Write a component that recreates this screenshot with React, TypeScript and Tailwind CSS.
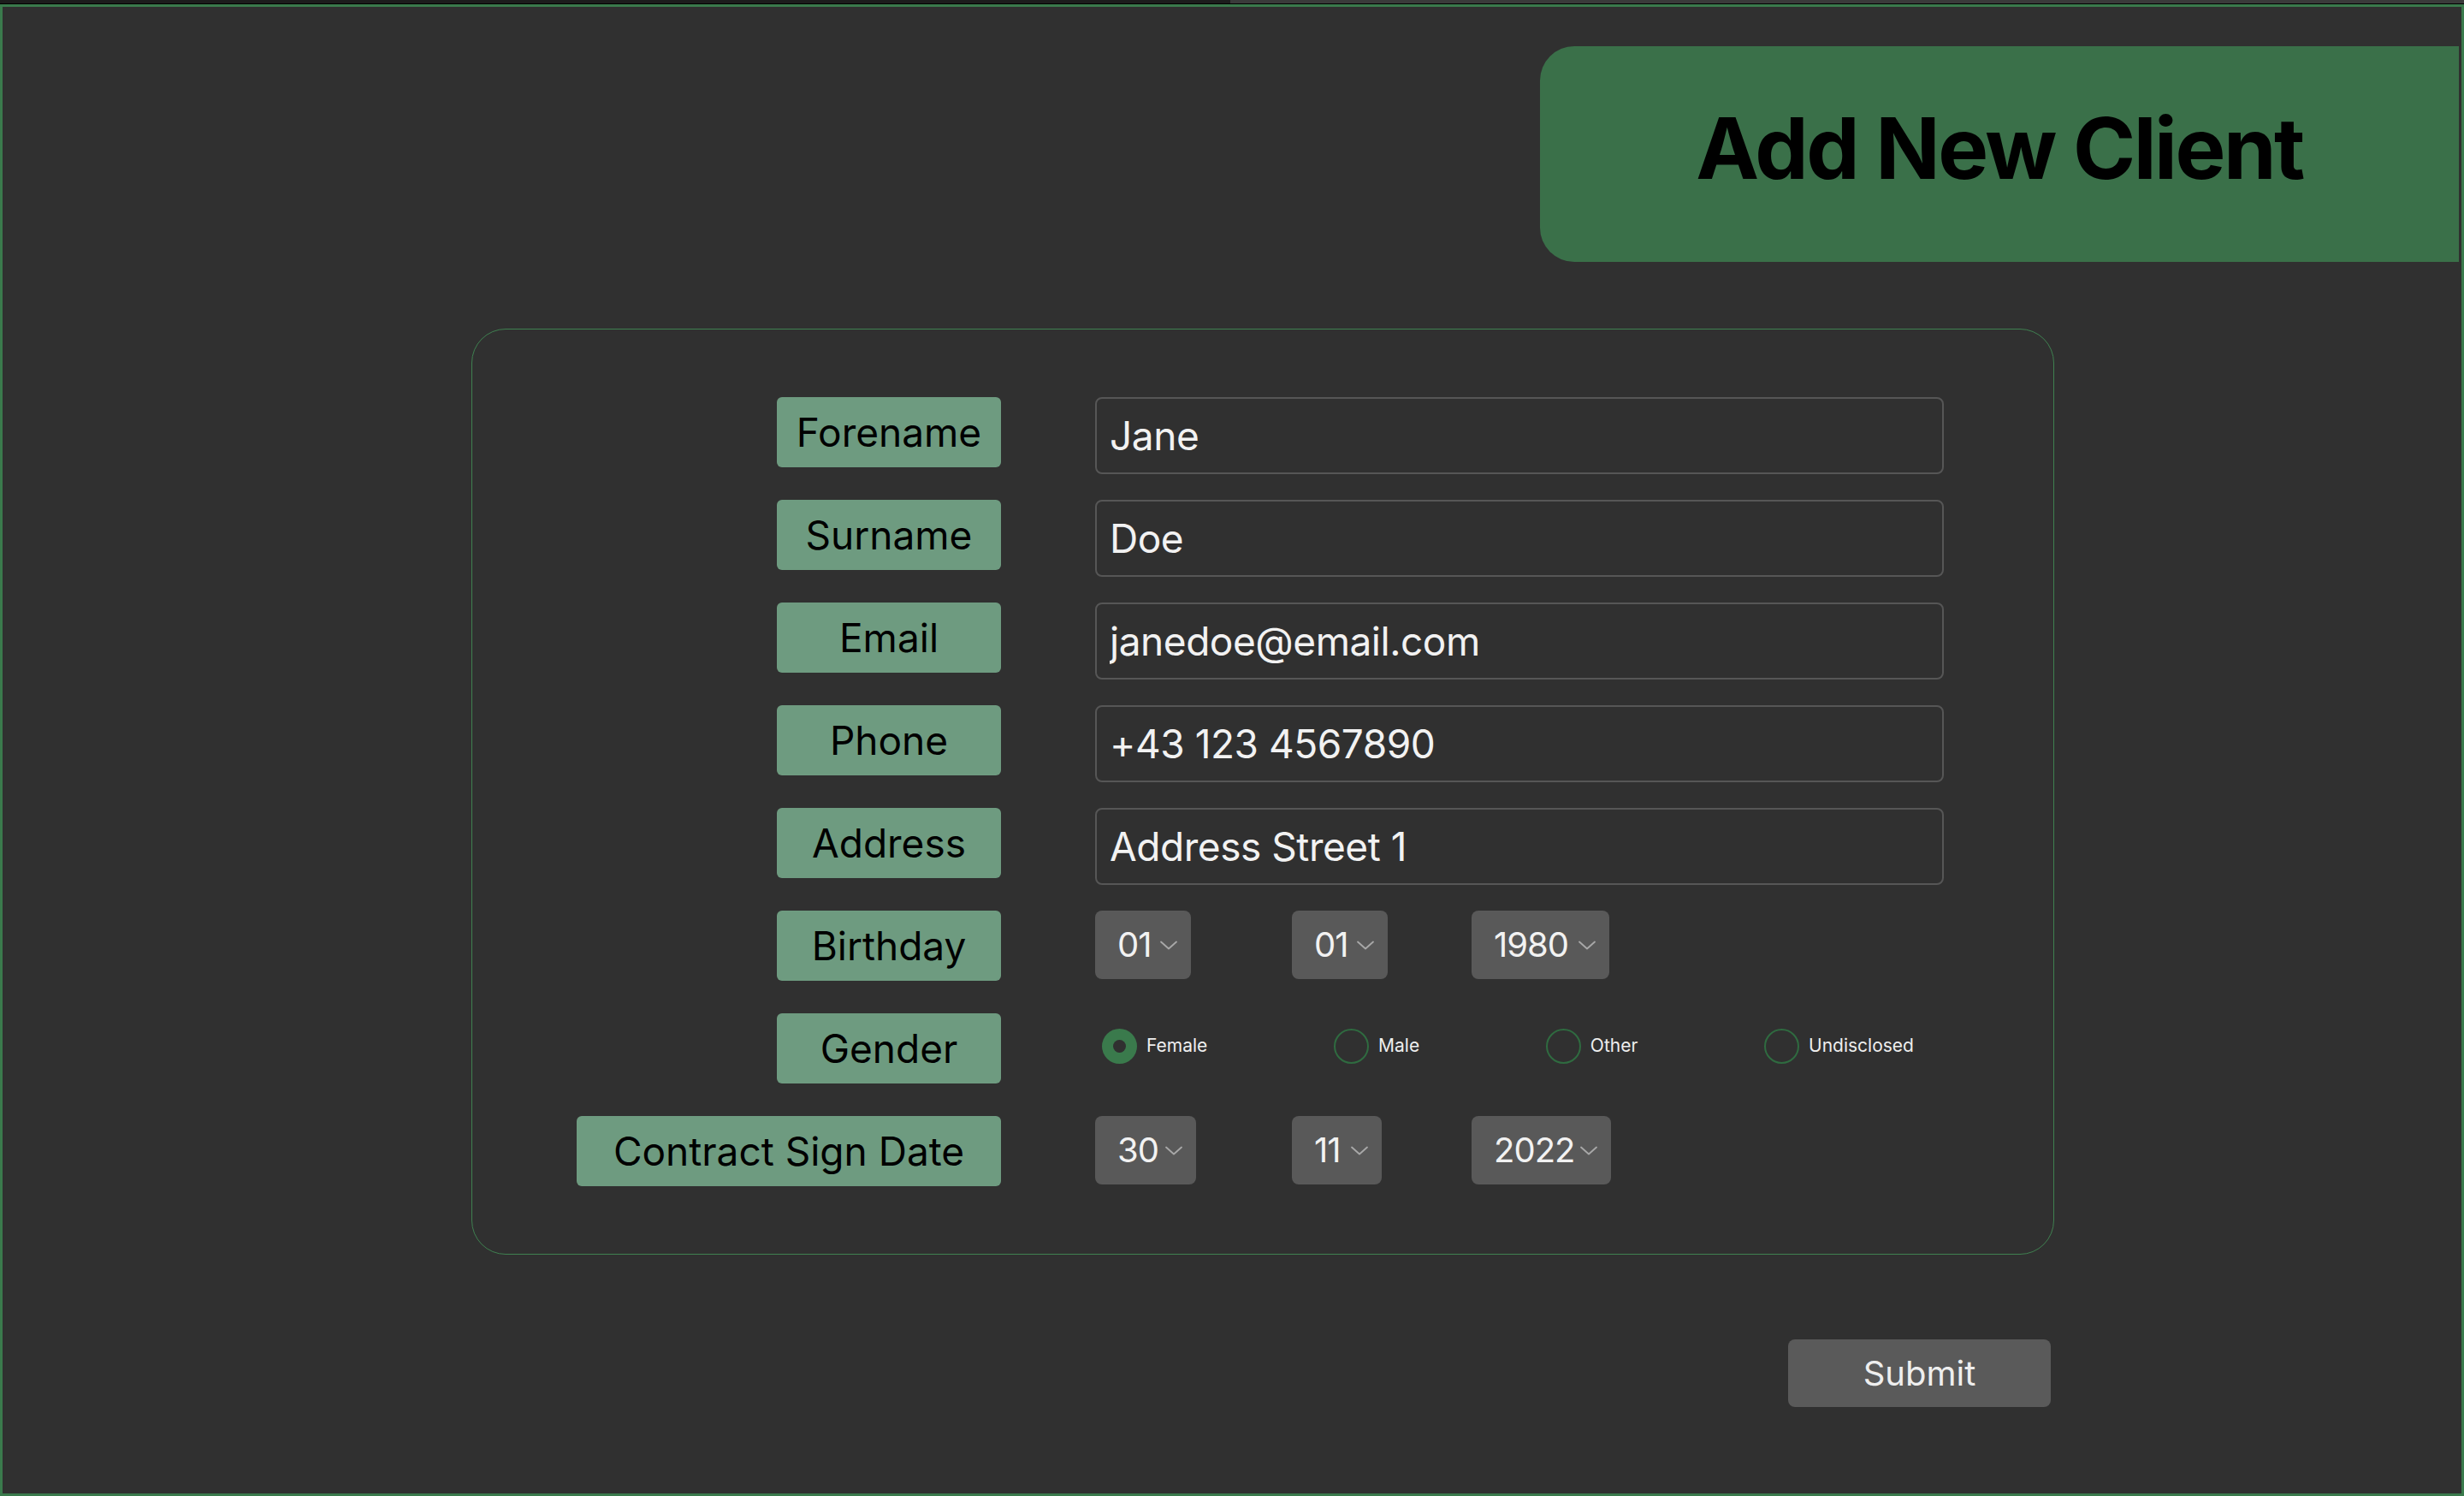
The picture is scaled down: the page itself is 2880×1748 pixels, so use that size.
type Field = { label: string; value: string };

const textFields: Field[] = [
  { label: 'Forename', value: 'Jane' },
  { label: 'Surname', value: 'Doe' },
  { label: 'Email', value: 'janedoe@email.com' },
  { label: 'Phone', value: '+43 123 4567890' },
  { label: 'Address', value: 'Address Street 1' },
];

const genders = ['Female', 'Male', 'Other', 'Undisclosed'];

function Label({ children, wide = false }: { children: string; wide?: boolean }) {
  return (
    <div
      className={`flex h-[82px] items-center justify-center rounded-[6px] bg-[#6e9b80] text-[46px] text-black ${
        wide ? 'w-[496px]' : 'w-[262px]'
      }`}
    >
      {children}
    </div>
  );
}

function Chevron() {
  return (
    <svg width="20" height="11" viewBox="0 0 20 11" fill="none" className="ml-auto shrink-0">
      <path d="M1 1.5 L10 9.5 L19 1.5" stroke="#a8a8a8" strokeWidth="1.8" strokeLinecap="round" strokeLinejoin="round" />
    </svg>
  );
}

function Select({ value, width }: { value: string; width: string }) {
  return (
    <div className={`flex h-[80px] items-center rounded-[8px] bg-[#595959] pl-[26px] pr-[16px] ${width}`}>
      <span className="text-[40px] tracking-tight text-[#f2f2f2]">{value}</span>
      <Chevron />
    </div>
  );
}

function Radio({ label, checked = false }: { label: string; checked?: boolean }) {
  return (
    <label className="flex items-center gap-[11px]">
      {checked ? (
        <span className="flex h-[41px] w-[41px] items-center justify-center rounded-full bg-[#3a7a4c]">
          <span className="h-[15px] w-[15px] rounded-full bg-[#303030]" />
        </span>
      ) : (
        <span className="h-[41px] w-[41px] rounded-full border-2 border-[#2f6b40]" />
      )}
      <span className="text-[21px] text-[#eeeeee]">{label}</span>
    </label>
  );
}

export default function App() {
  return (
    <div className="flex h-[1748px] w-[2880px] flex-col bg-[#303030] font-['Inter','Liberation_Sans',sans-serif]">
      {/* window chrome strip */}
      <div className="flex h-[4px] shrink-0">
        <div className="w-[1438px] bg-[#1c1c1c]" />
        <div className="flex-1 bg-[#3a3a3a]" />
      </div>
      <div className="h-px shrink-0 bg-black" />

      <main className="flex flex-1 flex-col border-[3px] border-[#3a7a4c]">
        <div className="mt-[46px] mr-[3px] ml-auto flex h-[252px] w-[1074px] items-center justify-center rounded-l-[40px] bg-[#3a7049] pb-[14px]">
          <h1 className="text-[99px] font-bold leading-none tracking-tight text-black">Add New Client</h1>
        </div>

        <form className="mt-[78px] ml-[548px] flex w-[1850px] flex-col gap-[30px] rounded-[40px] border border-[#3f8050] pt-[79px] pb-[71px]">
          {textFields.map((f) => (
            <div key={f.label} className="grid h-[90px] grid-cols-[618px_992px] gap-x-[110px]">
              <div className="flex justify-end">
                <Label>{f.label}</Label>
              </div>
              <input
                readOnly
                defaultValue={f.value}
                className="h-[90px] rounded-[8px] border-2 border-[#565656] bg-transparent pl-[15px] text-[46px] tracking-[-0.01em] text-[#f2f2f2] outline-none"
              />
            </div>
          ))}

          <div className="grid h-[90px] grid-cols-[618px_992px] gap-x-[110px]">
            <div className="flex justify-end">
              <Label>Birthday</Label>
            </div>
            <div className="grid grid-cols-[230px_210px_auto] items-start">
              <Select value="01" width="w-[112px]" />
              <Select value="01" width="w-[112px]" />
              <Select value="1980" width="w-[161px]" />
            </div>
          </div>

          <div className="grid h-[90px] grid-cols-[618px_992px] gap-x-[110px]">
            <div className="flex justify-end">
              <Label>Gender</Label>
            </div>
            <div className="ml-[8px] flex h-[76px] w-[949px] items-center justify-between">
              {genders.map((g, i) => (
                <Radio key={g} label={g} checked={i === 0} />
              ))}
            </div>
          </div>

          <div className="grid h-[90px] grid-cols-[618px_992px] gap-x-[110px]">
            <div className="flex justify-end">
              <Label wide>Contract Sign Date</Label>
            </div>
            <div className="grid grid-cols-[230px_210px_auto] items-start">
              <Select value="30" width="w-[118px]" />
              <Select value="11" width="w-[105px]" />
              <Select value="2022" width="w-[163px]" />
            </div>
          </div>
        </form>

        <div className="mt-[99px] ml-[548px] flex w-[1850px] justify-end pr-[4px]">
          <button
            type="button"
            className="h-[79px] w-[307px] rounded-[8px] bg-[#5a5a5a] text-[40px] text-[#eeeeee]"
          >
            Submit
          </button>
        </div>
      </main>
    </div>
  );
}
